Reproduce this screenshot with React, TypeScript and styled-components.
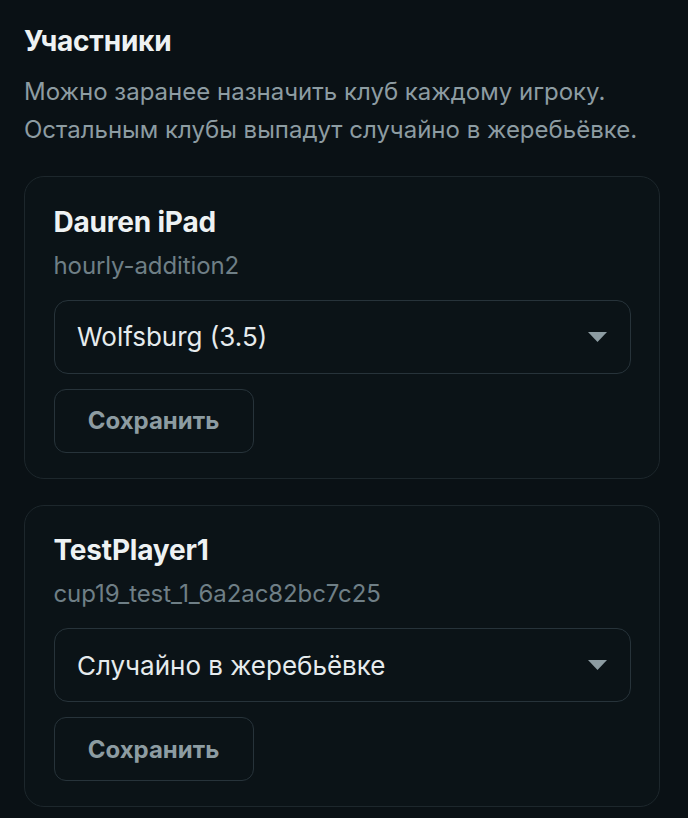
import React from "react";
import styled, { createGlobalStyle } from "styled-components";

const Global = createGlobalStyle`
  html, body { margin: 0; padding: 0; background: #0a1115; }
  body { font-family: Inter, "Noto Sans", sans-serif; -webkit-font-smoothing: antialiased; }
  * { box-sizing: border-box; }
`;

const Page = styled.div`
  width: 688px;
  min-height: 818px;
  background: #0a1115;
  padding: 24px 28px 0 24px;
  display: flex;
  flex-direction: column;
`;

const Title = styled.h2`
  margin: 0;
  font-size: 28px;
  line-height: 34px;
  font-weight: 700;
  color: #eef2f3;
  letter-spacing: -0.2px;
`;

const Description = styled.p`
  margin: 15px 0 0;
  font-size: 24px;
  line-height: 38px;
  color: #8d9ca2;
  letter-spacing: 0;
`;

const List = styled.div`
  margin-top: 27px;
  display: flex;
  flex-direction: column;
  gap: 26px;
`;

const Card = styled.section`
  border: 1.5px solid #1d272c;
  border-radius: 20px;
  background: #0b1317;
  padding: 27.5px 28.5px 25px;
  display: flex;
  flex-direction: column;
`;

const Name = styled.div`
  font-size: 28px;
  line-height: 34px;
  font-weight: 700;
  color: #eef2f3;
  letter-spacing: -0.2px;
`;

const Handle = styled.div`
  margin-top: 13px;
  font-size: 24px;
  line-height: 28px;
  color: #6f7f86;
  letter-spacing: -0.1px;
`;

const Select = styled.div`
  margin-top: 20px;
  height: 74px;
  border: 1.5px solid #27333a;
  border-radius: 14px;
  padding: 0 23px 0 22.5px;
  display: flex;
  align-items: center;
  justify-content: space-between;
  font-size: 26px;
  color: #e6ebed;
  letter-spacing: 0;
`;

const Arrow = styled.svg`
  width: 19px;
  height: 10px;
  flex: none;
`;

const SaveButton = styled.button`
  margin-top: 15px;
  align-self: flex-start;
  width: 200px;
  height: 64px;
  border: 1.5px solid #27333a;
  border-radius: 12px;
  background: transparent;
  font-family: inherit;
  font-size: 24px;
  font-weight: 700;
  color: #8d9ca2;
  letter-spacing: 0;
  cursor: pointer;
`;

const players = [
  { name: "Dauren iPad", handle: "hourly-addition2", club: "Wolfsburg (3.5)" },
  { name: "TestPlayer1", handle: "cup19_test_1_6a2ac82bc7c25", club: "Случайно в жеребьёвке" },
];

export default function App() {
  return (
    <>
      <Global />
      <Page>
        <Title>Участники</Title>
        <Description>
          Можно заранее назначить клуб каждому игроку.
          <br />
          Остальным клубы выпадут случайно в жеребьёвке.
        </Description>
        <List>
          {players.map((p) => (
            <Card key={p.handle}>
              <Name>{p.name}</Name>
              <Handle>{p.handle}</Handle>
              <Select>
                <span>{p.club}</span>
                <Arrow viewBox="0 0 19 10">
                  <path d="M0 0 H19 L9.5 10 Z" fill="#8d9ca2" />
                </Arrow>
              </Select>
              <SaveButton>Сохранить</SaveButton>
            </Card>
          ))}
        </List>
      </Page>
    </>
  );
}
